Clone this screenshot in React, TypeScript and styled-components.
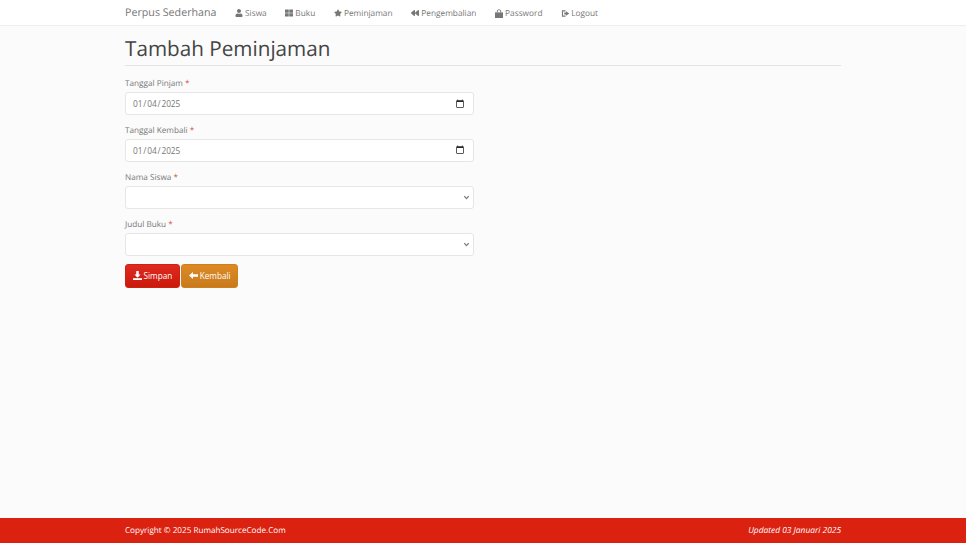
import { createGlobalStyle, styled } from "styled-components";
import { FaStar, FaThLarge, FaUser, FaBackward } from "react-icons/fa";
import type { ReactNode } from "react";

const GlobalStyle = createGlobalStyle`
    html, body { margin: 0; padding: 0; height: 100%; }
    body {
        background: #fbfbfb;
        color: #555;
        font-family: "Open Sans", "Noto Sans", sans-serif;
        font-size: 8.2px;
        text-rendering: geometricPrecision;
    }
    #root { height: 100%; }
`;

const Page = styled.div`
    display: flex;
    flex-direction: column;
    height: 543px;
    overflow: hidden;
`;

const Navbar = styled.nav`
    height: 25px;
    flex: none;
    background: #fff;
    border-bottom: 1px solid #eee;
`;

const Container = styled.div`
    width: 716px;
    margin: 0 auto;
`;

const NavInner = styled(Container)`
    display: flex;
    align-items: center;
    box-sizing: border-box;
    height: 25px;
    padding-top: 1px;
`;

const Brand = styled.span`
    font-size: 10.7px;
    color: #777;
    margin-right: 18.5px;
`;

const NavLink = styled.a`
    display: flex;
    align-items: center;
    color: #777;
    margin-right: 18.7px;
    font-size: 8.3px;
    white-space: nowrap;
`;

const NavIcon = styled.span`
    display: flex;
    align-items: center;
    width: 10px;
    flex: none;
`;

const Main = styled(Container)`
    flex: 1;
    padding-top: 10px;
`;

const Title = styled.h1`
    margin: 0 0 12px;
    padding-bottom: 2px;
    font-size: 20.7px;
    line-height: 27px;
    font-weight: 400;
    color: #444;
    border-bottom: 1px solid #e4e4e4;
`;

const Form = styled.form`
    width: 349px;
`;

const Fields = styled.div`
    display: flex;
    flex-direction: column;
    gap: 9.9px;
`;

const Label = styled.label`
    display: block;
    height: 12px;
    line-height: 12px;
    margin-bottom: 2px;
    color: #777;
`;

const Required = styled.span`
    color: #d9534f;
`;

const controlStyles = `
    display: block;
    box-sizing: border-box;
    width: 100%;
    height: 23px;
    padding: 0 8px;
    background-color: #fff;
    border: 1px solid #e6e6e6;
    border-radius: 3px;
    color: #777;
    font-family: inherit;
    font-size: 8.3px;
    outline: none;
`;

const DateInput = styled.input`
    ${controlStyles}

    &::-webkit-datetime-edit {
        margin-left: -2px;
        letter-spacing: -0.1px;
    }

    &::-webkit-calendar-picker-indicator {
        width: 10px;
        height: 10px;
        margin-right: 0;
        padding: 0;
        opacity: 0.85;
    }
`;

const Select = styled.select`
    ${controlStyles}
    appearance: none;
    background-image: url("data:image/svg+xml,%3Csvg xmlns='http://www.w3.org/2000/svg' viewBox='0 0 10 10'%3E%3Cpath d='M2.5 3.5 5 6.2 7.5 3.5' fill='none' stroke='%23777' stroke-width='1.3'/%3E%3C/svg%3E");
    background-repeat: no-repeat;
    background-position: right 2px center;
    background-size: 9px 9px;
`;

const Actions = styled.div`
    display: flex;
    gap: 1.5px;
    margin-top: 8.3px;
`;

const Button = styled.button<{ $variant: "danger" | "warning" }>`
    display: flex;
    align-items: center;
    justify-content: center;
    gap: 2px;
    height: 24px;
    padding: 0 6.5px;
    border: 1px solid ${({ $variant }) => ($variant === "danger" ? "#d0200f" : "#cf801c")};
    border-radius: 3px;
    background: ${({ $variant }) =>
        $variant === "danger"
            ? "linear-gradient(#df2a1f, #c91a0c)"
            : "linear-gradient(#dd8a24, #c87a1c)"};
    color: #fff;
    font-family: inherit;
    font-size: 8.2px;
`;

const Footer = styled.footer`
    flex: none;
    height: 25px;
    background: #db2210;
    color: #fff;
`;

const FooterInner = styled(Container)`
    display: flex;
    justify-content: space-between;
    align-items: center;
    height: 24px;
    font-size: 8.15px;
`;

const Updated = styled.em`
    font-style: italic;
    font-size: 8.4px;
`;

function LogoutIcon() {
    return (
        <svg width="9" height="9" viewBox="0 0 10 10" fill="currentColor">
            <path d="M1 1.5h4v1.2H2.2v4.6H5v1.2H1z" />
            <path d="M5.6 2.6 9.2 5 5.6 7.4V6H3.6V4h2z" />
        </svg>
    );
}

function BagLockIcon() {
    return (
        <svg width="8" height="9" viewBox="0 0 8 9" fill="currentColor">
            <path d="M0 3.4h8V9H0z" />
            <path d="M1.8 3.6V2.2C1.8 1 2.8.4 4 .4s2.2.6 2.2 1.8v1.4H5.3V2.2C5.3 1.5 4.7 1.2 4 1.2s-1.3.3-1.3 1v1.4z" />
        </svg>
    );
}

function SaveIcon() {
    return (
        <svg width="9" height="9" viewBox="0 0 10 10" fill="currentColor">
            <path d="M3.6 0h2.8v4h2L5 7.4 1.6 4h2z" />
            <path d="M0 8h10v2H0z" />
        </svg>
    );
}

function BackArrowIcon() {
    return (
        <svg width="9" height="9" viewBox="0 0 10 10" fill="currentColor">
            <path d="M0 5 4.4 1v2.6H10v2.8H4.4V9z" />
        </svg>
    );
}

const navItems: { label: string; icon: ReactNode }[] = [
    { label: "Siswa", icon: <FaUser size={8} /> },
    { label: "Buku", icon: <FaThLarge size={8} /> },
    { label: "Peminjaman", icon: <FaStar size={8} /> },
    { label: "Pengembalian", icon: <FaBackward size={8} /> },
    { label: "Password", icon: <BagLockIcon /> },
    { label: "Logout", icon: <LogoutIcon /> },
];

export default function App() {
    return (
        <Page>
            <GlobalStyle />
            <Navbar>
                <NavInner>
                    <Brand>Perpus Sederhana</Brand>
                    {navItems.map((item) => (
                        <NavLink key={item.label}>
                            <NavIcon>{item.icon}</NavIcon>
                            {item.label}
                        </NavLink>
                    ))}
                </NavInner>
            </Navbar>

            <Main>
                <Title>Tambah Peminjaman</Title>
                <Form>
                    <Fields>
                        <div>
                            <Label>
                                Tanggal Pinjam <Required>*</Required>
                            </Label>
                            <DateInput type="date" defaultValue="2025-01-04" />
                        </div>
                        <div>
                            <Label>
                                Tanggal Kembali <Required>*</Required>
                            </Label>
                            <DateInput type="date" defaultValue="2025-01-04" />
                        </div>
                        <div>
                            <Label>
                                Nama Siswa <Required>*</Required>
                            </Label>
                            <Select />
                        </div>
                        <div>
                            <Label>
                                Judul Buku <Required>*</Required>
                            </Label>
                            <Select />
                        </div>
                    </Fields>
                    <Actions>
                        <Button type="button" $variant="danger">
                            <SaveIcon />
                            Simpan
                        </Button>
                        <Button type="button" $variant="warning">
                            <BackArrowIcon />
                            Kembali
                        </Button>
                    </Actions>
                </Form>
            </Main>

            <Footer>
                <FooterInner>
                    <span>Copyright © 2025 RumahSourceCode.Com</span>
                    <Updated>Updated 03 Januari 2025</Updated>
                </FooterInner>
            </Footer>
        </Page>
    );
}
